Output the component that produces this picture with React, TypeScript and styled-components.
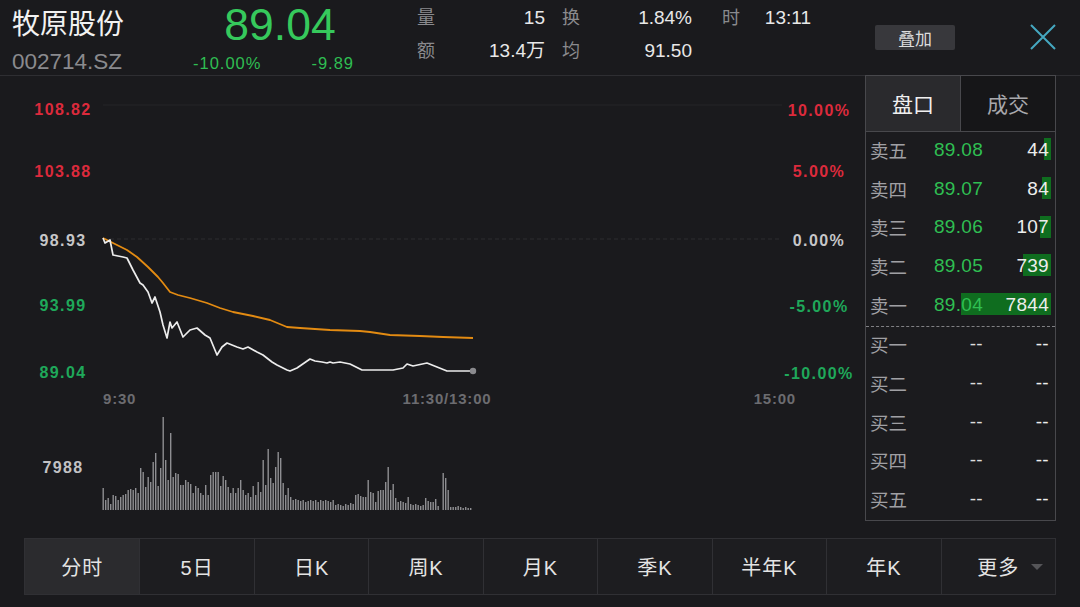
import React from 'react';
import styled, { createGlobalStyle } from 'styled-components';

const GlobalStyle = createGlobalStyle`
  html, body { margin: 0; padding: 0; background: #1a1a1d; }
  body { font-family: "Liberation Sans", "Noto Sans CJK SC", sans-serif; color: #e6e6e6; }
  * { box-sizing: border-box; }
`;

const Page = styled.div`
  width: 1080px;
  height: 607px;
  display: flex;
  flex-direction: column;
  background: #1a1a1d;
  overflow: hidden;
`;

/* ---------- header ---------- */
const Header = styled.header`
  height: 76px;
  flex: none;
  display: flex;
  border-bottom: 1px solid #2e2e32;
`;

const NameBlock = styled.div`
  width: 180px;
  padding: 6px 0 0 12px;
  display: flex;
  flex-direction: column;
`;

const StockName = styled.div`
  font-family: "Noto Sans CJK SC", sans-serif;
  font-size: 28px;
  line-height: 32px;
  color: #f2f2f2;
`;

const StockCode = styled.div`
  margin-top: 11px;
  font-size: 22.5px;
  line-height: 26px;
  color: #8a8a8e;
`;

const PriceBlock = styled.div`
  width: 182px;
  padding-top: 3px;
  display: flex;
  flex-direction: column;
  align-items: stretch;
`;

const BigPrice = styled.div`
  font-size: 44.5px;
  line-height: 44px;
  color: #36c95c;
  text-align: center;
  padding-left: 18px;
`;

const ChangeRow = styled.div`
  margin-top: 6px;
  display: flex;
  justify-content: space-between;
  padding: 0 8px 0 13px;
  font-size: 16.5px;
  line-height: 20px;
  letter-spacing: 1px;
  color: #2fbe52;
`;

const Stats = styled.div`
  margin-left: 55px;
  padding-top: 4px;
  display: flex;
  flex-direction: column;
  gap: 9px;
`;

const StatRow = styled.div`
  display: flex;
  height: 24px;
`;

const Stat = styled.div<{ $w: number; $mr?: number }>`
  width: ${(p) => p.$w}px;
  margin-right: ${(p) => p.$mr ?? 0}px;
  display: flex;
  justify-content: space-between;
  align-items: baseline;
  font-size: 19px;
  line-height: 24px;
`;

const StatLabel = styled.span`
  font-family: "Noto Sans CJK SC", sans-serif;
  font-size: 18px;
  color: #8a8a8e;
`;

const StatValue = styled.span`
  color: #e8e8e8;
`;

const OverlayButton = styled.button`
  margin: 25px 0 0 64px;
  width: 80px;
  height: 25px;
  border: none;
  border-radius: 2px;
  background: #38383c;
  color: #dcdcdc;
  font-family: "Noto Sans CJK SC", sans-serif;
  font-size: 17px;
  line-height: 25px;
  padding: 0;
`;

const CloseIcon = styled.svg`
  margin: 24px 0 0 75px;
  width: 26px;
  height: 26px;
  flex: none;
`;

/* ---------- main ---------- */
const Main = styled.div`
  height: 445px;
  flex: none;
  display: flex;
`;

const ChartArea = styled.div`
  width: 865px;
  flex: none;
`;

const ChartSvg = styled.svg`
  display: block;
`;

const AxisText = styled.text<{ $c: string }>`
  font-family: "Liberation Sans", sans-serif;
  font-weight: bold;
  font-size: 16px;
  letter-spacing: 1.4px;
  fill: ${(p) => p.$c};
`;

const TimeText = styled.text`
  font-family: "Liberation Sans", sans-serif;
  font-weight: bold;
  font-size: 15px;
  letter-spacing: 0.8px;
  fill: #6c6c70;
`;

const OrderBook = styled.div`
  width: 191px;
  margin-top: -1px;
  height: 446px;
  border: 1px solid #48484c;
  display: flex;
  flex-direction: column;
  background: #1b1b1e;
`;

const BookTabs = styled.div`
  height: 56px;
  flex: none;
  display: flex;
  border-bottom: 1px solid #48484c;
`;

const BookTab = styled.div<{ $active?: boolean }>`
  flex: 1;
  display: flex;
  align-items: center;
  justify-content: center;
  font-family: "Noto Sans CJK SC", sans-serif;
  font-size: 21px;
  padding-bottom: 2px;
  color: ${(p) => (p.$active ? '#f0f0f0' : '#a8a8ac')};
  background: ${(p) => (p.$active ? '#2a2a2d' : '#161618')};
  & + & { border-left: 1px solid #48484c; }
`;

const BookSection = styled.div<{ $dashed?: boolean }>`
  flex: 1;
  display: flex;
  flex-direction: column;
  border-bottom: ${(p) => (p.$dashed ? '1px dashed #808084' : 'none')};
`;

const BookRow = styled.div`
  flex: 1;
  position: relative;
  display: grid;
  grid-template-columns: 48px 65px 1fr;
  align-items: center;
  padding: 0 6px 3px 4px;
  font-size: 19px;
`;

const VolBar = styled.div`
  position: absolute;
  right: 4px;
  top: 50%;
  height: 22px;
  margin-top: -2px;
  transform: translateY(-50%);
  background: #0f6d1f;
`;

const RowLabel = styled.span`
  position: relative;
  font-family: "Noto Sans CJK SC", sans-serif;
  font-size: 18.5px;
  color: #a0a0a4;
`;

const RowPrice = styled.span<{ $empty?: boolean }>`
  position: relative;
  text-align: right;
  color: ${(p) => (p.$empty ? '#dcdcdc' : '#2fbf52')};
  letter-spacing: 0.3px;
`;

const RowVol = styled.span`
  position: relative;
  text-align: right;
  color: #ededed;
  letter-spacing: 0.3px;
`;

/* ---------- bottom tabs ---------- */
const PeriodBar = styled.nav`
  margin: 17px 0 0 24px;
  width: 1032px;
  height: 57px;
  flex: none;
  display: grid;
  grid-template-columns: repeat(9, 1fr);
  border: 1px solid #303034;
`;

const PeriodTab = styled.div<{ $active?: boolean }>`
  position: relative;
  display: flex;
  align-items: center;
  justify-content: center;
  font-family: "Liberation Sans", "Noto Sans CJK SC", sans-serif;
  font-size: 20px;
  letter-spacing: 1px;
  color: #e4e4e4;
  background: ${(p) => (p.$active ? '#2b2b2e' : '#1d1d20')};
  & + & { border-left: 1px solid #303034; }
`;

const Caret = styled.span`
  position: absolute;
  right: 12px;
  top: 50%;
  margin-top: -3px;
  width: 0;
  height: 0;
  border-left: 6px solid transparent;
  border-right: 6px solid transparent;
  border-top: 6px solid #555558;
`;

/* ---------- data ---------- */
const pricePts: [number, number][] = [
  [103, 238], [105, 243], [110, 240], [113, 255], [123, 257], [127, 258], [133, 270], [140, 283],
  [143, 285], [148, 292], [152, 303], [155, 297], [160, 312], [163, 325], [167, 338], [170, 322],
  [172, 328], [177, 322], [183, 337], [190, 330], [197, 328], [205, 335], [210, 338], [217, 355],
  [222, 347], [227, 343], [237, 347], [243, 349], [248, 347], [257, 352], [263, 355], [272, 362],
  [277, 365], [287, 370], [290, 371], [297, 368], [310, 359], [315, 361], [322, 362], [327, 363],
  [330, 362], [333, 363], [340, 362], [350, 364], [362, 370], [393, 370], [403, 368], [407, 364],
  [413, 366], [427, 363], [437, 367], [447, 371], [473, 371],
];

const avgPts: [number, number][] = [
  [103, 238], [117, 245], [127, 250], [137, 257], [148, 267], [158, 277], [163, 283], [170, 292],
  [178, 295], [190, 298], [207, 303], [220, 308], [233, 312], [253, 316], [270, 320], [287, 327],
  [300, 328], [330, 330], [360, 331], [370, 332], [390, 335], [420, 336], [443, 337], [473, 338],
];

const volumes: number[] = [
  22, 10, 12, 6, 15, 14, 10, 13, 15, 16, 20, 21, 20, 22, 17, 42, 38, 23, 33, 28,
  48, 57, 24, 42, 93, 50, 30, 77, 33, 37, 36, 25, 25, 30, 28, 26, 17, 24, 22, 17,
  15, 25, 15, 35, 38, 38, 38, 24, 34, 30, 23, 17, 22, 17, 22, 30, 20, 15, 17, 13,
  24, 15, 28, 18, 50, 25, 61, 32, 27, 43, 58, 52, 27, 15, 22, 13, 10, 11, 10, 9,
  10, 8, 9, 10, 9, 10, 8, 10, 9, 10, 9, 8, 10, 5, 6, 5, 4, 6, 5, 7,
  6, 15, 16, 14, 13, 13, 30, 18, 17, 8, 19, 20, 20, 28, 43, 20, 26, 12, 8, 9,
  8, 7, 13, 6, 5, 6, 5, 4, 5, 12, 9, 8, 8, 11, 4, 0, 37, 32, 20, 3,
  3, 3, 4, 3, 2, 3, 2, 2,
];

const sells = [
  { label: '卖五', price: '89.08', vol: '44', bar: 7 },
  { label: '卖四', price: '89.07', vol: '84', bar: 9 },
  { label: '卖三', price: '89.06', vol: '107', bar: 11 },
  { label: '卖二', price: '89.05', vol: '739', bar: 28 },
  { label: '卖一', price: '89.04', vol: '7844', bar: 90 },
];

const buys = ['买一', '买二', '买三', '买四', '买五'];

const periods = ['分时', '5日', '日K', '周K', '月K', '季K', '半年K', '年K', '更多'];

const toPoints = (pts: [number, number][]) => pts.map(([x, y]) => `${x},${y}`).join(' ');

function Chart() {
  return (
    <ChartSvg width={865} height={445} viewBox="0 76 865 445">
      <line x1={103} y1={105} x2={782} y2={105} stroke="#252529" strokeWidth={1} />
      <line x1={103} y1={239} x2={782} y2={239} stroke="#2c2c30" strokeWidth={1} strokeDasharray="4 3" />

      <AxisText $c="#dc2a3c" x={63} y={115} textAnchor="middle">108.82</AxisText>
      <AxisText $c="#dc2a3c" x={63} y={177} textAnchor="middle">103.88</AxisText>
      <AxisText $c="#c6c6c8" x={63} y={246} textAnchor="middle">98.93</AxisText>
      <AxisText $c="#1fa85a" x={63} y={311} textAnchor="middle">93.99</AxisText>
      <AxisText $c="#1fa85a" x={63} y={378} textAnchor="middle">89.04</AxisText>

      <AxisText $c="#dc2a3c" x={819} y={116} textAnchor="middle">10.00%</AxisText>
      <AxisText $c="#dc2a3c" x={819} y={177} textAnchor="middle">5.00%</AxisText>
      <AxisText $c="#c6c6c8" x={819} y={246} textAnchor="middle">0.00%</AxisText>
      <AxisText $c="#1fa85a" x={819} y={312} textAnchor="middle">-5.00%</AxisText>
      <AxisText $c="#1fa85a" x={819} y={379} textAnchor="middle">-10.00%</AxisText>

      <polyline points={toPoints(avgPts)} fill="none" stroke="#e38b12" strokeWidth={1.8} strokeLinejoin="round" />
      <polyline points={toPoints(pricePts)} fill="none" stroke="#ececec" strokeWidth={1.7} strokeLinejoin="round" />
      <circle cx={473} cy={371} r={3.2} fill="#8a8a8e" />

      <TimeText x={103} y={404}>9:30</TimeText>
      <TimeText x={447} y={404} textAnchor="middle">11:30/13:00</TimeText>
      <TimeText x={796} y={404} textAnchor="end">15:00</TimeText>

      <AxisText $c="#c2c2c4" x={63} y={473} textAnchor="middle">7988</AxisText>
      {volumes.map((h, i) =>
        h > 0 ? (
          <rect key={i} x={102.5 + i * 2.5} y={510 - h} width={1.4} height={h} fill="#8e8e92" />
        ) : null
      )}
    </ChartSvg>
  );
}

export default function App() {
  return (
    <Page>
      <GlobalStyle />
      <Header>
        <NameBlock>
          <StockName>牧原股份</StockName>
          <StockCode>002714.SZ</StockCode>
        </NameBlock>
        <PriceBlock>
          <BigPrice>89.04</BigPrice>
          <ChangeRow>
            <span>-10.00%</span>
            <span>-9.89</span>
          </ChangeRow>
        </PriceBlock>
        <Stats>
          <StatRow>
            <Stat $w={128} $mr={17}><StatLabel>量</StatLabel><StatValue>15</StatValue></Stat>
            <Stat $w={130} $mr={30}><StatLabel>换</StatLabel><StatValue>1.84%</StatValue></Stat>
            <Stat $w={89}><StatLabel>时</StatLabel><StatValue>13:11</StatValue></Stat>
          </StatRow>
          <StatRow>
            <Stat $w={128} $mr={17}><StatLabel>额</StatLabel><StatValue>13.4万</StatValue></Stat>
            <Stat $w={130}><StatLabel>均</StatLabel><StatValue>91.50</StatValue></Stat>
          </StatRow>
        </Stats>
        <OverlayButton>叠加</OverlayButton>
        <CloseIcon viewBox="0 0 26 26">
          <path d="M1 1 L25 25 M25 1 L1 25" stroke="#45a8c0" strokeWidth={2} fill="none" />
        </CloseIcon>
      </Header>

      <Main>
        <ChartArea>
          <Chart />
        </ChartArea>
        <OrderBook>
          <BookTabs>
            <BookTab $active>盘口</BookTab>
            <BookTab>成交</BookTab>
          </BookTabs>
          <BookSection $dashed>
            {sells.map((s) => (
              <BookRow key={s.label}>
                <VolBar style={{ width: s.bar }} />
                <RowLabel>{s.label}</RowLabel>
                <RowPrice>{s.price}</RowPrice>
                <RowVol>{s.vol}</RowVol>
              </BookRow>
            ))}
          </BookSection>
          <BookSection>
            {buys.map((b) => (
              <BookRow key={b}>
                <RowLabel>{b}</RowLabel>
                <RowPrice $empty>--</RowPrice>
                <RowVol>--</RowVol>
              </BookRow>
            ))}
          </BookSection>
        </OrderBook>
      </Main>

      <PeriodBar>
        {periods.map((p, i) => (
          <PeriodTab key={p} $active={i === 0}>
            {p}
            {p === '更多' && <Caret />}
          </PeriodTab>
        ))}
      </PeriodBar>
    </Page>
  );
}
